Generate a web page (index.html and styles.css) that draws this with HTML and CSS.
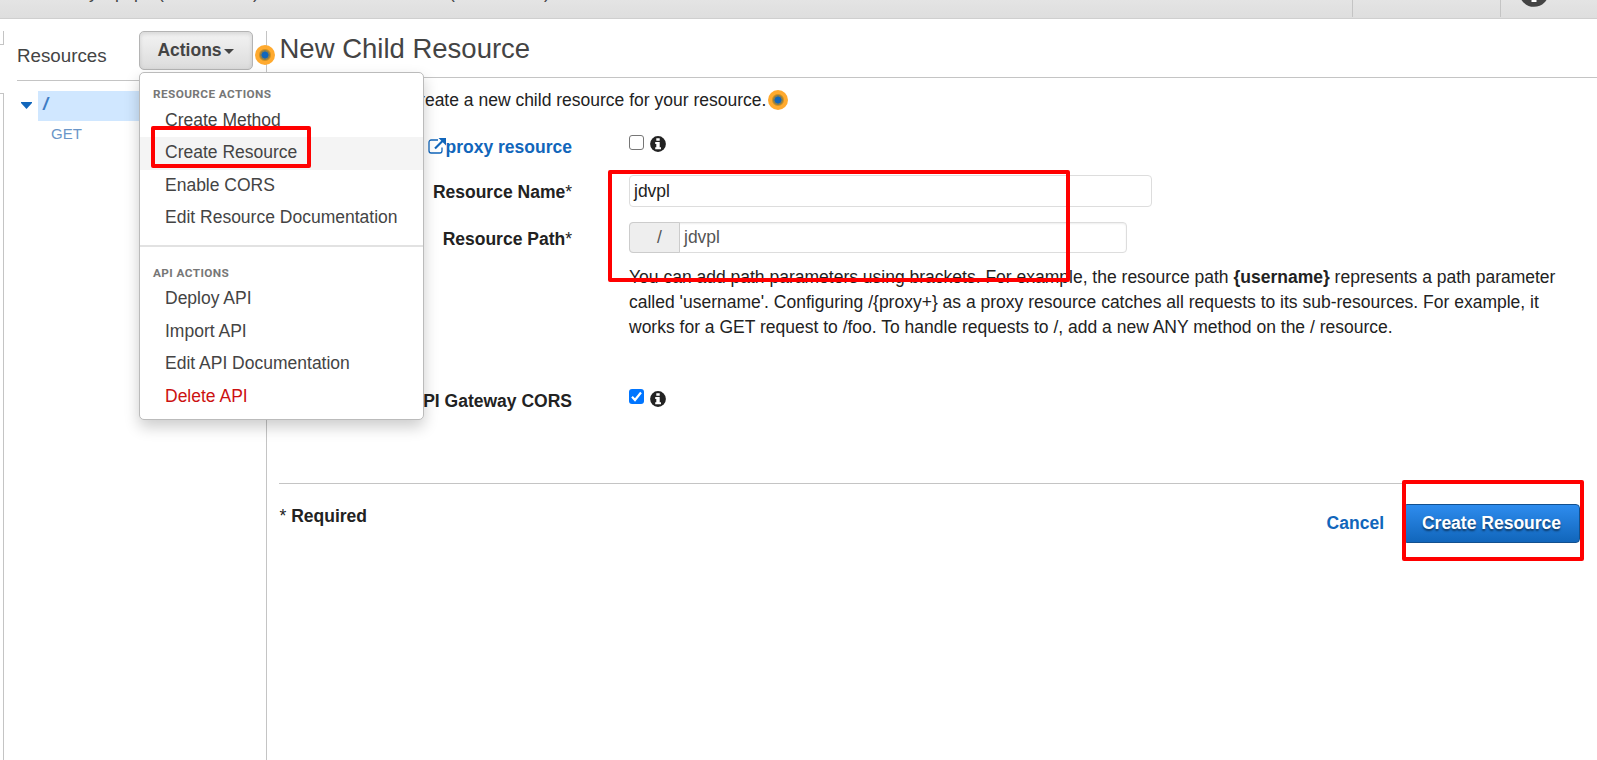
FILE: index.html
```html
<!DOCTYPE html>
<html lang="en">
<head>
<meta charset="utf-8">
<title>New Child Resource</title>
<link rel="stylesheet" href="styles.css">
</head>
<body>
<svg width="0" height="0" class="defs">
  <symbol id="info" viewBox="0 0 16 16"><circle cx="8" cy="8" r="7.9" fill="currentColor"/><path d="M6.300 2.200h3.400v2.600H6.300zM5.200 6h4.500v5.200H11V13.200H5.200v-2h1.100V7.900H5.200z" fill="#fff"/></symbol>
</svg>
<header class="topbar">
  <span class="crumb c1">y</span><span class="crumb c2">p</span><span class="crumb c3">p</span><span class="crumb c4">(</span><span class="crumb c5">)</span><span class="crumb c6">(</span><span class="crumb c7">)</span>
  <span class="help-cell"><svg class="help" viewBox="0 0 30 30"><circle cx="15" cy="15" r="14.8" fill="#444"/><path d="M12.5 20h5v5h-5z" fill="#fff"/></svg></span>
</header>
<div class="app">
  <div class="strip"><div class="strip-top"></div><div class="strip-rest"></div></div>
  <aside class="sidebar">
    <div class="side-head">
      <span class="side-title">Resources</span>
      <button class="actions">Actions<svg class="caret" viewBox="0 0 10 5"><path d="M0 0h10L5 5z" fill="#444"/></svg></button>
      <span class="beacon beacon-side"></span>
      <nav class="menu">
        <h6 class="group">RESOURCE ACTIONS</h6>
        <a class="item">Create Method</a>
        <a class="item active">Create Resource</a>
        <a class="item">Enable CORS</a>
        <a class="item">Edit Resource Documentation</a>
        <h6 class="group second">API ACTIONS</h6>
        <a class="item">Deploy API</a>
        <a class="item">Import API</a>
        <a class="item">Edit API Documentation</a>
        <a class="item danger">Delete API</a>
      </nav>
    </div>
    <div class="tree-row"><svg class="toggle" viewBox="0 0 11 7"><path d="M0 0h11v1L5.5 7 0 1z" fill="#1166bb"/></svg><span class="root">/</span></div>
    <div class="method">GET</div>
  </aside>
  <main class="main">
    <h1 class="title">New Child Resource</h1>
    <div class="body">
      <p class="intro">Use this page to create a new child resource for your resource.<span class="beacon beacon-intro"></span></p>
      <div class="row proxy">
        <label class="label">Configure as <span class="link"><svg class="ext" viewBox="0 0 18 16"><path d="M10 2H3.2A2.2 2.2 0 0 0 1 4.2v8.6A2.2 2.2 0 0 0 3.200 15h8.600a2.200 2.200 0 0 0 2.200-2.200V9.500" fill="none" stroke="currentColor" stroke-width="1.3"/><path d="M7 10.500L15 2.500" stroke="currentColor" stroke-width="2.200"/><path d="M10.500 0H18v7.500z" fill="currentColor"/></svg>proxy resource</span></label>
        <div class="check"><span class="box"></span><svg class="info"><use href="#info"/></svg></div>
      </div>
      <div class="row name"><label class="label">Resource Name<span class="star">*</span></label><div class="input">jdvpl</div></div>
      <div class="row path"><label class="label">Resource Path<span class="star">*</span></label><div class="group-input"><span class="addon">/</span><span class="value">jdvpl</span></div></div>
      <p class="hint">You can add path parameters using brackets. For example, the resource path <b>{username}</b> represents a path parameter<br>called 'username'. Configuring /{proxy+} as a proxy resource catches all requests to its sub-resources. For example, it<br>works for a GET request to /foo. To handle requests to /, add a new ANY method on the / resource.</p>
      <div class="row cors"><label class="label">Enable API Gateway CORS</label><div class="check"><svg class="box on" viewBox="0 0 15 15"><path d="M3 7.800L6 11 12 3.500" fill="none" stroke="#fff" stroke-width="2.200"/></svg><svg class="info"><use href="#info"/></svg></div></div>
      <footer class="footer">
        <span class="required"><span class="star">*</span> Required</span>
        <span class="buttons"><a class="cancel">Cancel</a><button class="primary">Create Resource</button></span>
      </footer>
    </div>
  </main>
</div>
<div class="mark mark-menu"></div>
<div class="mark mark-fields"></div>
<div class="mark mark-submit"></div>
</body>
</html>
```
FILE: styles.css
```css
* { box-sizing: border-box; }
body { margin: 0; height: 760px; overflow: hidden; position: relative; display: flex; flex-direction: column; background: #fff; color: #222; font: 17.5px/25px "Liberation Sans", Arial, sans-serif; }
h1, h6, p { margin: 0; }
.defs { position: absolute; }
.topbar { position: relative; flex: none; height: 19px; overflow: hidden; background: linear-gradient(#e4e4e4, #dedede); border-bottom: 1px solid #cfcfcf; display: flex; justify-content: flex-end; }
/* breadcrumb text scrolled almost out of view */
.crumb { position: absolute; top: -20px; color: #444; }
.c1 { left: 89px; } .c2 { left: 115px; } .c3 { left: 134px; } .c4 { left: 158px; } .c5 { left: 253px; } .c6 { left: 449px; } .c7 { left: 544px; }
.help-cell { width: 245px; height: 17px; border-left: 1px solid #c4c4c4; display: flex; }
.help-cell::before { content: ""; width: 147px; border-right: 1px solid #c4c4c4; margin-right: 18px; flex: none; }
.help { width: 30px; height: 30px; margin-top: -23px; flex: none; }
.app { flex: 1; display: flex; padding-top: 12px; min-height: 0; }
.strip { width: 4px; display: flex; flex-direction: column; gap: 48px; }
.strip-top { height: 14px; border: solid #c4c4c4; border-width: 0 1px 1px 0; }
.strip-rest { flex: 1; border: solid #c4c4c4; border-width: 1px 1px 0 0; }
.sidebar { width: 262px; padding-left: 13px; }
.side-head { position: relative; height: 50px; border-bottom: 1px solid #c4c4c4; display: flex; justify-content: space-between; padding-right: 13px; }
.side-title { font-size: 18.75px; color: #444; padding-top: 12px; }
.actions { width: 114px; height: 39px; border: 1px solid #b4b4b4; border-radius: 5px; background: linear-gradient(#f3f3f3, #dcdcdc); box-shadow: inset 0 2px 4px rgba(0,0,0,.12); color: #444; font: bold 17.5px/25px "Liberation Sans", Arial, sans-serif; padding: 0; display: flex; align-items: center; justify-content: center; }
.caret { width: 10px; height: 5px; margin: 2px 1px 0 2px; }
.beacon { position: absolute; width: 20px; height: 20px; border-radius: 50%; background: radial-gradient(circle, #1166bb 0 3.200px, #8b7d4c 3.800px 4.500px, #d3921f 5.500px, #ffaa2f 6.500px); z-index: 2; }
.beacon-side { left: 238px; top: 14px; }
.beacon-intro { left: 489px; top: 1.500px; }
.menu { position: absolute; left: 122px; top: 41px; width: 285px; height: 348px; background: #fff; border: 1px solid #bbb; border-radius: 5px; box-shadow: 0 7px 15px rgba(0,0,0,.2); z-index: 5; padding-top: 11px; }
.group { font: bold 11.800px/21.600px Roboto, sans-serif; letter-spacing: .4px; color: #777; padding-left: 13px; margin-bottom: -1px; }
.group.second { margin-top: 10.600px; border-top: 2px solid #e2e2e2; padding-top: 15.400px; }
.item { display: block; height: 32.500px; line-height: 28px; padding: 1px 0 0 25px; color: #444; white-space: nowrap; }
.active { background: #f4f4f4; }
.danger { color: #c11; }
.tree-row { display: flex; align-items: center; height: 30px; margin-top: 10px; padding-left: 4px; }
.toggle { width: 11px; height: 7px; margin: -2px 6px 0 0; }
.root { flex: 1; height: 30px; margin-right: 5px; background: #d0e7ff; color: #3e7cc4; padding: 1px 0 0 5px; font-style: italic; font-weight: bold; font-size: 18px; }
.method { font-size: 15px; color: #6a96c8; padding: 0 0 0 34px; }
.main { flex: 1; border-left: 1px solid #c4c4c4; }
.title { font-size: 27.500px; font-weight: normal; line-height: 32px; color: #444; height: 47px; border-bottom: 1px solid #c4c4c4; padding: 2px 0 0 12.500px; }
.body { padding: 10px 16px 0 12px; }
.intro { position: relative; margin-bottom: 18px; }
.row { display: grid; grid-template-columns: 293px 1fr; column-gap: 57px; }
.label { font-weight: bold; text-align: right; white-space: nowrap; }
.star { font-weight: normal; }
.link { color: #1166bb; }
.ext { width: 18px; height: 16px; vertical-align: -1px; }
.proxy, .cors { height: 25px; }
.check { display: flex; gap: 6px; }
.box { width: 15px; height: 15px; border: 1px solid #767676; border-radius: 3px; margin-top: 3px; }
.proxy .box { margin-top: 4px; }
.proxy .info { margin-top: 5px; }
.on { background: #0075ff; border: 0; }
.info { width: 16px; height: 16px; margin-top: 5px; }
.proxy .label { padding-top: 4px; }
.name { margin-top: 19px; height: 32px; }
.name .label { padding-top: 5px; }
.input { width: 523px; height: 32px; border: 1px solid #ddd; border-radius: 4px; padding: 3px 4px; }
.path { margin-top: 15px; height: 31px; }
.path .label { padding-top: 5px; }
.group-input { width: 498px; height: 31px; border: 1px solid #ddd; border-radius: 4px; display: flex; box-shadow: inset 0 1px 2px rgba(0,0,0,.07); color: #555; }
.addon { width: 51px; margin: -1px 0 -1px -1px; background: #eee; border: 1px solid #ccc; border-radius: 4px 0 0 4px; padding: 2px 0 0 27px; }
.value { padding: 2px 4px; }
.hint { margin: 12px 0 0 350px; white-space: nowrap; }
.cors { margin-top: 46px; }
.cors .label { padding-top: 3px; }
.footer { border-top: 1px solid #c4c4c4; margin-top: 72px; display: flex; justify-content: space-between; padding: 20px 1px 0 0; }
.required { font-weight: bold; padding-left: .500px; }
.buttons { display: flex; align-items: center; gap: 19px; height: 39px; }
.cancel { color: #1166bb; font-weight: bold; }
.primary { width: 177px; height: 39px; border: 1px solid #12508f; border-radius: 4px; background: linear-gradient(#2e8cee, #1166bb); color: #fff; font: bold 17.500px/25px "Liberation Sans", Arial, sans-serif; text-shadow: 0 2px 2px rgba(0,0,0,.5); padding: 0 0 1px; }
.mark { position: absolute; border: 4px solid #f00; border-radius: 2px; z-index: 10; }
.mark-menu { left: 151px; top: 126px; width: 160px; height: 42px; }
.mark-fields { left: 608px; top: 170px; width: 462px; height: 112px; }
.mark-submit { left: 1402px; top: 480px; width: 182px; height: 81px; }
```
